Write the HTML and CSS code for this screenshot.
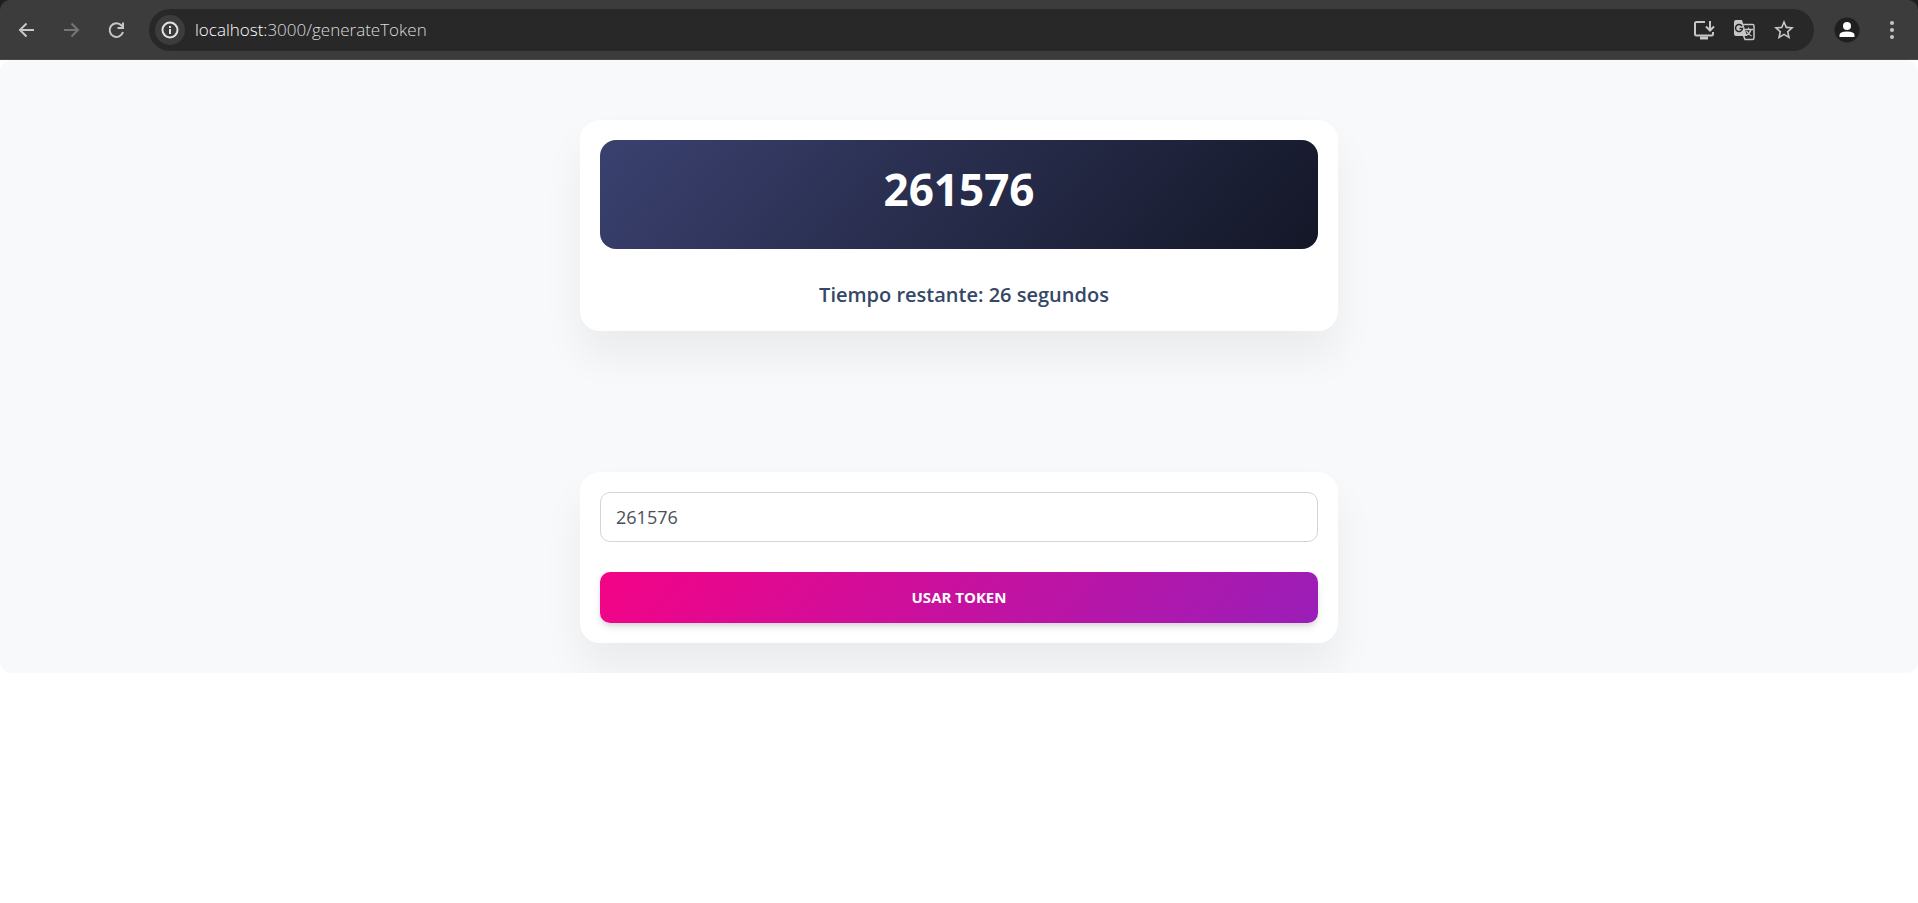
FILE: index.html
```html
<!DOCTYPE html>
<html lang="es">
<head>
<meta charset="utf-8">
<title>generateToken</title>
<link rel="stylesheet" href="styles.css">
</head>
<body>
<header class="browser">
  <div class="toolbar">
    <nav class="nav-buttons" aria-label="Navegación">
      <button class="icon-button" type="button" aria-label="Atrás"><svg width="24" height="24" viewBox="0 0 24 24" fill="none" stroke="#c7c7c7" stroke-width="2"><path d="M20 12H6M12.500 5.500L6 12l6.500 6.500"/></svg></button>
      <button class="icon-button" type="button" aria-label="Adelante"><svg width="24" height="24" viewBox="0 0 24 24" fill="none" stroke="#757575" stroke-width="2"><path d="M5 12h14M12.500 5.500L19 12l-6.500 6.500"/></svg></button>
      <button class="icon-button" type="button" aria-label="Recargar"><svg width="24" height="24" viewBox="0 0 24 24" fill="none" stroke="#c7c7c7" stroke-width="2"><path d="M19 14a6.800 6.800 0 1 1-1.500-6.500l1.500 2"/><path d="M19 4.500V10h-5.500"/></svg></button>
    </nav>
    <div class="address">
      <button class="site-info" type="button" aria-label="Información del sitio"><svg width="18" height="18" viewBox="0 0 18 18" fill="none" stroke="#e3e3e3" stroke-width="2"><circle cx="9" cy="9" r="7.500"/><path d="M9 8v5M9 5v2"/></svg></button>
      <div class="url"><span class="host">localhost:</span>3000/generateToken</div>
      <div class="address-actions">
        <button class="icon-button" type="button" aria-label="Instalar"><svg width="24" height="24" viewBox="0 0 24 24" fill="none" stroke="#c7c7c7" stroke-width="2"><path d="M13 4H4.500Q3 4 3 5.500v10.500Q3 17.500 4.500 17.500h15q1.500 0 1.500-1.500v-2"/><path d="M8 20h8" stroke-width="3"/><path d="M18 3v9M14 8.500l4 4 4-4"/></svg></button>
        <button class="icon-button" type="button" aria-label="Traducir"><svg width="24" height="24" viewBox="0 0 24 24" fill="none"><path d="M4 2h6l5 16H4q-2 0-2-2V4q0-2 2-2z" fill="#c7c7c7"/><path d="M11 6.500H20.500q1.500 0 1.500 1.500v12q0 1.500-1.500 1.500H13l-1.500-4" stroke="#c7c7c7" stroke-width="1.500"/><path d="M10 8.200A3.500 3.500 0 1 0 10.500 10.500H7.500" stroke="#282828" stroke-width="1.500"/><path d="M13 11.500h8M16.500 9.500v2M19 11.500q-1 4-5 6M14.500 13q2 3.500 5 5" stroke="#c7c7c7" stroke-width="1.300"/></svg></button>
        <button class="icon-button" type="button" aria-label="Favorito"><svg width="24" height="24" viewBox="0 0 24 24" fill="#c7c7c7"><path d="M22 9.240l-7.190-.62L12 2 9.190 8.630 2 9.240l5.460 4.730L5.820 21 12 17.270 18.180 21l-1.630-7.030L22 9.240zM12 15.400l-3.760 2.270 1-4.280-3.320-2.880 4.380-.38L12 6.100l1.710 4.040 4.380.38-3.320 2.880 1 4.280L12 15.400z"/></svg></button>
      </div>
    </div>
    <button class="icon-button" type="button" aria-label="Perfil"><svg width="26" height="26" viewBox="0 0 26 26"><circle cx="13" cy="13" r="12.500" fill="#1f1f1f"/><circle cx="13" cy="9" r="4" fill="#fff"/><path d="M5.500 20v-2q0-3.500 7.500-3.500t7.500 3.500v2z" fill="#fff"/></svg></button>
    <button class="icon-button menu" type="button" aria-label="Menú"><svg width="24" height="24" viewBox="0 0 24 24" fill="#c7c7c7"><circle cx="12" cy="5" r="2"/><circle cx="12" cy="12" r="2"/><circle cx="12" cy="19" r="2"/></svg></button>
  </div>
</header>
<main class="page">
  <section class="card token-card">
    <div class="token-banner"><h1 class="token">261576</h1></div>
    <p class="remaining">Tiempo restante: 26 segundos</p>
  </section>
  <form class="card token-form">
    <input class="token-input" type="text" value="261576" aria-label="Token">
    <button class="submit" type="button">USAR TOKEN</button>
  </form>
</main>
</body>
</html>
```
FILE: styles.css
```css
* {
  box-sizing: border-box;
}

body {
  margin: 0;
  background: #fff;
  color: #344767;
  font-family: "Open Sans", "Noto Sans", sans-serif;
}

button {
  border: 0;
  font-family: inherit;
  cursor: pointer;
}

.browser {
  background: #1f1f1f;
  border-bottom: 1px solid #4a4a4a;
}

.toolbar {
  display: flex;
  align-items: center;
  height: 59px;
  padding: 0 14px;
  background: #3c3c3c;
  border-radius: 10px 10px 0 0;
}

.nav-buttons {
  display: flex;
  gap: 21px;
  margin-right: 21px;
}

.icon-button {
  display: flex;
  padding: 0;
  background: transparent;
}

.address {
  display: flex;
  flex: 1;
  align-items: center;
  height: 42px;
  margin-right: 20px;
  padding: 0 18px 0 6px;
  border-radius: 21px;
  background: #282828;
}

.site-info {
  display: flex;
  align-items: center;
  justify-content: center;
  width: 30px;
  height: 30px;
  padding: 0;
  border-radius: 50%;
  background: #3c3c3c;
}

.url {
  flex: 1;
  margin-left: 10px;
  color: #dcdcdc;
  font-size: 17px;
  font-weight: 300;
  line-height: 24px;
}

.host {
  color: #fff;
}

.address-actions {
  display: flex;
  gap: 16px;
}

.menu {
  margin-left: 20px;
}

.page {
  display: flex;
  flex-direction: column;
  align-items: center;
  gap: 141px;
  padding: 60px 24px 30px;
  border-radius: 12px;
  background: #f8f9fa;
}

.card {
  width: 100%;
  max-width: 758px;
  padding: 20px;
  border-radius: 20px;
  background: #fff;
  box-shadow: 0 25px 42px 0 rgba(0, 0, 0, 0.06);
}

.token-banner {
  padding: 20px 20px 31px;
  border-radius: 16px;
  background: linear-gradient(310deg, #141727, #3a416f);
  text-align: center;
}

.token {
  margin: 0;
  color: #fff;
  font-size: 44px;
  font-weight: 700;
  line-height: 58px;
}

.remaining {
  margin: 30px 0 0;
  padding-left: 10px;
  font-size: 20px;
  font-weight: 600;
  line-height: 32px;
  text-align: center;
}

.token-form {
  display: flex;
  flex-direction: column;
  gap: 30px;
}

.token-input {
  width: 100%;
  height: 50px;
  padding: 0 15px;
  border: 1px solid #d2d6da;
  border-radius: 10px;
  background: #fff;
  color: #495057;
  font-family: inherit;
  font-size: 18px;
}

.submit {
  height: 51px;
  padding: 0 20px 2px;
  border-radius: 10px;
  background: linear-gradient(310deg, #7928ca, #ff0080) 25% 0 / 150%;
  box-shadow: 0 5px 9px -1px rgba(0, 0, 0, 0.11), 0 3px 5px -1px rgba(0, 0, 0, 0.07);
  color: #fff;
  font-size: 15px;
  font-weight: 700;
}
```
